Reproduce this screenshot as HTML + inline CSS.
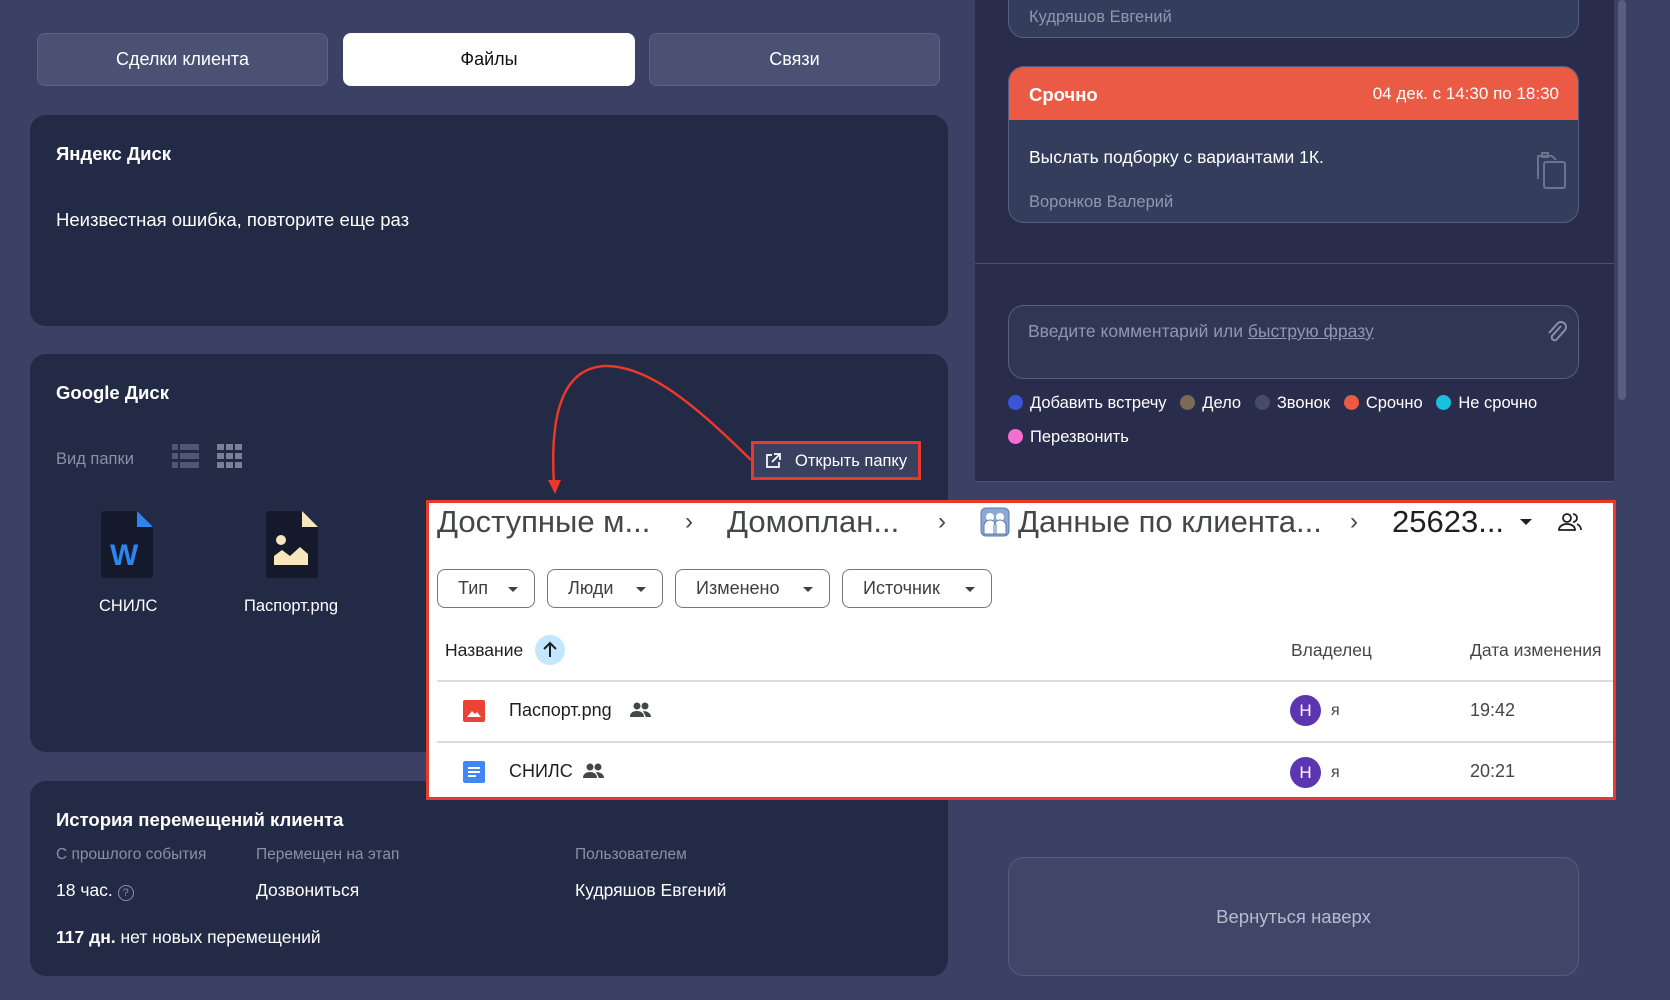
<!DOCTYPE html>
<html><head><meta charset="utf-8"><style>
*{box-sizing:border-box;margin:0;padding:0}
body{width:1670px;height:1000px;overflow:hidden;background:#3b4165;font-family:"Liberation Sans",sans-serif;color:#fff;position:relative}
.a{position:absolute}
.tab{position:absolute;top:33px;height:53px;border-radius:8px;background:#4a5173;border:1px solid #5c6283;display:flex;align-items:center;justify-content:center;font-size:18px;color:#fff}
.panel{position:absolute;left:30px;width:918px;background:#232a45;border-radius:16px}
.t{position:absolute;white-space:nowrap}
.card{position:absolute;left:1008px;width:571px;background:#343d5c;border:1px solid #56607f;border-radius:16px;overflow:hidden}
.dot{display:inline-block;width:15px;height:15px;border-radius:50%;vertical-align:-2px;margin-right:7px}
.chip{position:absolute;top:569px;height:39px;border:1.5px solid #747775;border-radius:8px;font-size:18px;color:#3c4043;display:flex;align-items:center;padding-left:20px}
.chip:after{content:"";position:absolute;right:16px;top:17px;border:5px solid transparent;border-top-color:#3c4043}
.g{color:#1f1f1f}
</style></head><body>
<div class="a" style="left:975px;top:0;width:639px;height:482px;background:#2a2c4b"></div>
<div class="a" style="left:975px;top:263px;width:639px;height:1px;background:#4b4f6e"></div>
<div class="a" style="left:975px;top:481px;width:639px;height:1px;background:#4b4f6e"></div>
<div class="a" style="left:1618px;top:0;width:8px;height:400px;background:#5a5f7c;border-radius:4px"></div>

<div class="tab" style="left:37px;width:291px">Сделки клиента</div>
<div class="tab" style="left:343px;width:292px;background:#fff;color:#111;border-color:#fff">Файлы</div>
<div class="tab" style="left:649px;width:291px">Связи</div>

<div class="panel" style="top:115px;height:211px">
<div class="t" style="left:26px;top:28px;font-weight:bold;font-size:18.5px">Яндекс Диск</div>
<div class="t" style="left:26px;top:94px;font-size:18.5px">Неизвестная ошибка, повторите еще раз</div>
</div>

<div class="panel" style="top:354px;height:398px">
<div class="t" style="left:26px;top:28px;font-weight:bold;font-size:18.5px">Google Диск</div>
<div class="t" style="left:26px;top:96px;font-size:16.5px;color:#8990a8">Вид папки</div>
<svg class="a" style="left:142px;top:90px" width="28" height="26"><g fill="#4f5772"><rect x="0" y="0" width="6" height="6"/><rect x="8" y="0" width="19" height="6"/><rect x="0" y="9" width="6" height="6"/><rect x="8" y="9" width="19" height="6"/><rect x="0" y="18" width="6" height="6"/><rect x="8" y="18" width="19" height="6"/></g></svg>
<svg class="a" style="left:187px;top:90px" width="28" height="26"><g fill="#7a8098"><rect x="0" y="0" width="7" height="6"/><rect x="9" y="0" width="7" height="6"/><rect x="18" y="0" width="7" height="6"/><rect x="0" y="9" width="7" height="6"/><rect x="9" y="9" width="7" height="6"/><rect x="18" y="9" width="7" height="6"/><rect x="0" y="18" width="7" height="6"/><rect x="9" y="18" width="7" height="6"/><rect x="18" y="18" width="7" height="6"/></g></svg>
<div class="a" style="left:721px;top:87px;width:170px;height:39px;border:3px solid #e8392a;background:#3a4060"></div>
<svg class="a" style="left:734px;top:98px" width="18" height="18" viewBox="0 0 18 18" fill="none" stroke="#fff" stroke-width="1.7"><path d="M8 3H3v12h12v-5M10 2h6v6M16 2L8 10"/></svg>
<div class="t" style="left:765px;top:98px;font-size:16.5px">Открыть папку</div>
<svg class="a" style="left:71px;top:157px" width="52" height="67" viewBox="0 0 52 67"><path d="M3 0h33l16 16v48a3 3 0 0 1-3 3H3a3 3 0 0 1-3-3V3a3 3 0 0 1 3-3z" fill="#141a2b"/><path d="M36 0l16 16H36z" fill="#2b86f0"/><text x="9" y="54" font-family="Liberation Sans" font-weight="bold" font-size="30" fill="#2b86f0">W</text></svg>
<div class="t" style="left:69px;top:243px;font-size:16.5px">СНИЛС</div>
<svg class="a" style="left:236px;top:157px" width="52" height="67" viewBox="0 0 52 67"><path d="M3 0h33l16 16v48a3 3 0 0 1-3 3H3a3 3 0 0 1-3-3V3a3 3 0 0 1 3-3z" fill="#141a2b"/><path d="M36 0l16 16H36z" fill="#f8e6bf"/><circle cx="15" cy="29" r="5" fill="#f8e6bf"/><path d="M8 54V45l8-6 8 6 10-9 8 7v11z" fill="#f8e6bf"/></svg>
<div class="t" style="left:214px;top:243px;font-size:16.5px">Паспорт.png</div>
</div>

<div class="panel" style="top:781px;height:195px">
<div class="t" style="left:26px;top:28px;font-weight:bold;font-size:18.5px">История перемещений клиента</div>
<div class="t" style="left:26px;top:65px;font-size:15.5px;color:#8990a8">С прошлого события</div>
<div class="t" style="left:226px;top:65px;font-size:15.5px;color:#8990a8">Перемещен на этап</div>
<div class="t" style="left:545px;top:65px;font-size:15.5px;color:#8990a8">Пользователем</div>
<div class="t" style="left:26px;top:99px;font-size:17.5px">18 час. <span style="display:inline-block;width:16px;height:16px;border:1px solid #8990a8;border-radius:50%;font-size:11px;text-align:center;color:#8990a8;line-height:15px">?</span></div>
<div class="t" style="left:226px;top:99px;font-size:17.5px">Дозвониться</div>
<div class="t" style="left:545px;top:99px;font-size:17.5px">Кудряшов Евгений</div>
<div class="t" style="left:26px;top:146px;font-size:17.5px"><b>117 дн.</b> нет новых перемещений</div>
</div>

<div class="card" style="top:-20px;height:58px"><div class="t" style="left:20px;top:27px;font-size:16.5px;color:#9097ad">Кудряшов Евгений</div></div>
<div class="card" style="top:66px;height:157px">
<div class="a" style="left:0;top:0;width:100%;height:53px;background:#ea5a45"></div>
<div class="t" style="left:20px;top:17px;font-weight:bold;font-size:18.5px">Срочно</div>
<div class="t" style="right:19px;top:17px;font-size:17px">04 дек. с 14:30 по 18:30</div>
<div class="t" style="left:20px;top:80px;font-size:17.5px">Выслать подборку с вариантами 1К.</div>
<div class="t" style="left:20px;top:126px;font-size:16.5px;color:#9097ad">Воронков Валерий</div>
<svg class="a" style="left:524px;top:84px" width="36" height="40" viewBox="0 0 36 40" fill="none" stroke="#6c7390" stroke-width="2"><path d="M5 28V5h14M19 5l4 4"/><rect x="11" y="11" width="21" height="26" rx="2"/><rect x="9" y="2" width="6" height="4"/></svg>
</div>
<div class="card" style="top:305px;height:74px;background:#2f3755">
<div class="t" style="left:19px;top:15px;font-size:17.5px;color:#9097ad">Введите комментарий или <u>быструю фразу</u></div>
<svg class="a" style="left:535px;top:12px" width="24" height="26" viewBox="0 0 24 26" fill="none" stroke="#8a90a8" stroke-width="2"><path d="M17 8L8 18a3 3 0 0 0 4 4l9-10a5 5 0 0 0-7-7L5 15"/></svg>
</div>
<div class="t" style="left:1008px;top:394px;font-size:16.5px"><span class="dot" style="background:#3856d6"></span>Добавить встречу &nbsp;&nbsp;<span class="dot" style="background:#7b6a55"></span>Дело &nbsp;&nbsp;<span class="dot" style="background:#454c6a"></span>Звонок &nbsp;&nbsp;<span class="dot" style="background:#ea5a45"></span>Срочно &nbsp;&nbsp;<span class="dot" style="background:#19c1dc"></span>Не срочно</div>
<div class="t" style="left:1008px;top:428px;font-size:16.5px"><span class="dot" style="background:#f56fcf"></span>Перезвонить</div>
<div class="card" style="top:857px;height:119px;background:#3f4668;border-color:#555c7e"><div class="t" style="left:0;width:100%;text-align:center;top:48px;font-size:18.5px;color:#b7bccd">Вернуться наверх</div></div>

<svg class="a" style="left:0;top:0" width="1670" height="1000"><path d="M751 460 C700 410 650 365 605 366 C560 368 550 420 554 484" fill="none" stroke="#e8392a" stroke-width="2.5"/><path d="M548 480l7 14 6-14z" fill="#e8392a"/></svg>

<div class="a" style="left:426px;top:500px;width:1190px;height:300px;background:#fff;border:3px solid #e8392a"></div>
<div class="t g" style="left:437px;top:504px;font-size:31px;color:#444746">Доступные м...</div>
<div class="t" style="left:685px;top:508px;font-size:24px;color:#444746">›</div>
<div class="t" style="left:727px;top:504px;font-size:31px;color:#444746">Домоплан...</div>
<div class="t" style="left:938px;top:508px;font-size:24px;color:#444746">›</div>
<svg class="a" style="left:980px;top:507px" width="30" height="30" viewBox="0 0 30 30"><rect x="1" y="1" width="28" height="28" rx="5" fill="#8aa9d9" stroke="#5a7bb0"/><circle cx="10" cy="10" r="4" fill="#fff"/><circle cx="20" cy="10" r="4" fill="#fff"/><path d="M4 27v-8a6 6 0 0 1 12 0v8zM14 27v-8a6 6 0 0 1 12 0v8z" fill="#fff" stroke="#5a7bb0"/></svg>
<div class="t" style="left:1018px;top:504px;font-size:31px;color:#444746">Данные по клиента...</div>
<div class="t" style="left:1350px;top:508px;font-size:24px;color:#444746">›</div>
<div class="t" style="left:1392px;top:504px;font-size:31px;color:#1f1f1f">25623...</div>
<div class="a" style="left:1520px;top:519px;border:6px solid transparent;border-top-color:#1f1f1f"></div>
<svg class="a" style="left:1558px;top:512px" width="24" height="20" viewBox="0 0 24 20" fill="none" stroke="#1f1f1f" stroke-width="1.8"><circle cx="9" cy="6" r="4"/><path d="M1 18c0-4 4-6 8-6s8 2 8 6zM15 2a4 4 0 0 1 0 8M19 12c2 1 4 3 4 6"/></svg>
<div class="chip" style="left:437px;width:98px">Тип</div>
<div class="chip" style="left:547px;width:116px">Люди</div>
<div class="chip" style="left:675px;width:155px">Изменено</div>
<div class="chip" style="left:842px;width:150px">Источник</div>
<div class="t g" style="left:445px;top:640px;font-size:17.5px">Название</div>
<div class="a" style="left:535px;top:635px;width:30px;height:30px;border-radius:50%;background:#c2e7ff"></div>
<svg class="a" style="left:540px;top:640px" width="20" height="20" viewBox="0 0 20 20" fill="none" stroke="#1f1f1f" stroke-width="2"><path d="M10 17V3M4 9l6-6 6 6"/></svg>
<div class="t" style="left:1291px;top:640px;font-size:17.5px;color:#444746">Владелец</div>
<div class="t" style="left:1470px;top:640px;font-size:17.5px;color:#444746">Дата изменения</div>
<div class="a" style="left:437px;top:680px;width:1176px;height:1.5px;background:#dadce0"></div>
<div class="a" style="left:437px;top:741px;width:1176px;height:1.5px;background:#dadce0"></div>
<svg class="a" style="left:463px;top:700px" width="22" height="22" viewBox="0 0 22 22"><rect width="22" height="22" rx="2" fill="#ea4335"/><path d="M4 17l5-6 3 3 2-2 4 5z" fill="#fff"/></svg>
<div class="t g" style="left:509px;top:700px;font-size:18px">Паспорт.png</div>
<svg class="a" style="left:630px;top:701px" width="22" height="18" viewBox="0 0 22 18" fill="#444746"><circle cx="7" cy="5" r="3.5"/><circle cx="15" cy="5" r="3.5"/><path d="M0 16c0-4 3-6 7-6s7 2 7 6zM13 10c4 0 8 2 8 6h-5z"/></svg>
<svg class="a" style="left:463px;top:761px" width="22" height="22" viewBox="0 0 22 22"><rect width="22" height="22" rx="2" fill="#4285f4"/><path d="M5 7h12M5 11h12M5 15h8" stroke="#fff" stroke-width="2"/></svg>
<div class="t g" style="left:509px;top:761px;font-size:18px">СНИЛС</div>
<svg class="a" style="left:583px;top:762px" width="22" height="18" viewBox="0 0 22 18" fill="#444746"><circle cx="7" cy="5" r="3.5"/><circle cx="15" cy="5" r="3.5"/><path d="M0 16c0-4 3-6 7-6s7 2 7 6zM13 10c4 0 8 2 8 6h-5z"/></svg>
<div class="a" style="left:1290px;top:695px;width:31px;height:31px;border-radius:50%;background:#5e35b1;color:#fff;font-size:17px;text-align:center;line-height:31px">Н</div>
<div class="a" style="left:1290px;top:757px;width:31px;height:31px;border-radius:50%;background:#5e35b1;color:#fff;font-size:17px;text-align:center;line-height:31px">Н</div>
<div class="t" style="left:1331px;top:702px;font-size:16px;color:#444746">я</div>
<div class="t" style="left:1331px;top:764px;font-size:16px;color:#444746">я</div>
<div class="t" style="left:1470px;top:700px;font-size:18px;color:#444746">19:42</div>
<div class="t" style="left:1470px;top:761px;font-size:18px;color:#444746">20:21</div>
</body></html>
